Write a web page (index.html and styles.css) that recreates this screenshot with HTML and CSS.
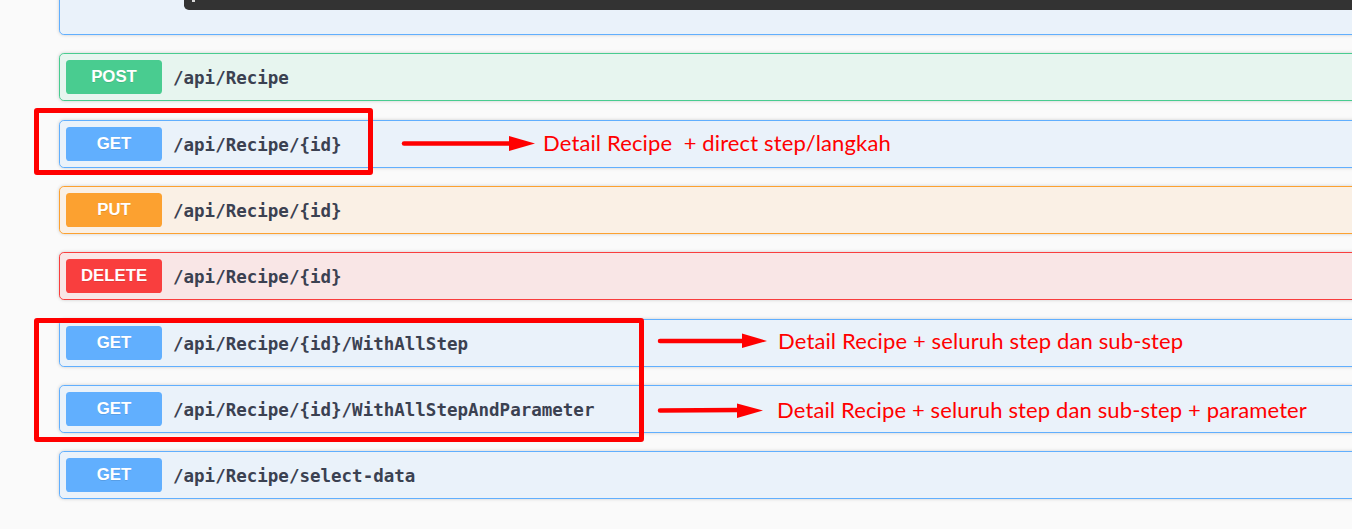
FILE: index.html
```html
<!DOCTYPE html>
<html>
<head>
<meta charset="utf-8">
<link rel="stylesheet" href="styles.css">
</head>
<body>
<div class="page">
  <div class="opblocks">
    <div class="opblock get expanded">
      <div class="op-body">
        <div class="code"><span class="code-tail"></span></div>
      </div>
    </div>
    <div class="opblock post">
      <div class="summary"><span class="method">POST</span><span class="path">/api/Recipe</span></div>
    </div>
    <div class="opblock get">
      <div class="summary"><span class="method">GET</span><span class="path">/api/Recipe/{id}</span></div>
    </div>
    <div class="opblock put">
      <div class="summary"><span class="method">PUT</span><span class="path">/api/Recipe/{id}</span></div>
    </div>
    <div class="opblock delete">
      <div class="summary"><span class="method">DELETE</span><span class="path">/api/Recipe/{id}</span></div>
    </div>
    <div class="opblock get">
      <div class="summary"><span class="method">GET</span><span class="path">/api/Recipe/{id}/WithAllStep</span></div>
    </div>
    <div class="opblock get">
      <div class="summary"><span class="method">GET</span><span class="path">/api/Recipe/{id}/WithAllStepAndParameter</span></div>
    </div>
    <div class="opblock get">
      <div class="summary"><span class="method">GET</span><span class="path">/api/Recipe/select-data</span></div>
    </div>
  </div>

  <div class="mark mark-1"></div>
  <div class="mark mark-2"></div>

  <svg class="arrows" width="1352" height="529" viewBox="0 0 1352 529">
    <line x1="404" y1="143.5" x2="512" y2="143.5" class="shaft"/>
    <polygon points="509,136 535,143.5 509,151" class="head"/>
    <line x1="660" y1="341" x2="745" y2="341" class="shaft"/>
    <polygon points="742,333.5 767,341 742,348" class="head"/>
    <line x1="660" y1="410.5" x2="740" y2="410" class="shaft"/>
    <polygon points="737,403.5 763,410.5 737,418" class="head"/>
  </svg>

  <span class="note note-1">Detail Recipe  + direct step/langkah</span>
  <span class="note note-2">Detail Recipe + seluruh step dan sub-step</span>
  <span class="note note-3">Detail Recipe + seluruh step dan sub-step + parameter</span>
</div>
</body>
</html>
```

FILE: styles.css
```css
html, body {
  margin: 0;
  padding: 0;
  background: #fafafa;
}

.page {
  position: relative;
  width: 1352px;
  height: 529px;
  overflow: hidden;
  background: #fafafa;
}

.opblocks {
  display: flex;
  flex-direction: column;
  gap: 18.33px;
  width: 1400px;
  margin-top: -51px;
  padding-left: 59px;
}

.opblock {
  border: 1px solid #61affe;
  border-radius: 4.8px;
  box-shadow: 0 0 3.6px rgba(0, 0, 0, 0.19);
  background: rgba(97, 175, 254, 0.1);
}

.opblock.post {
  border-color: #49cc90;
  background: rgba(73, 204, 144, 0.1);
}
.opblock.put {
  border-color: #fca130;
  background: rgba(252, 161, 48, 0.1);
}
.opblock.delete {
  border-color: #f93e3e;
  background: rgba(249, 62, 62, 0.1);
}

.op-body {
  padding: 0 0 24px 124px;
}

.code {
  height: 60px;
  background: #333333;
  border-radius: 0 0 4.8px 4.8px;
  display: flex;
  align-items: flex-end;
  padding-left: 8px;
}

.code-tail {
  width: 3px;
  height: 2px;
  margin-bottom: 8px;
  background: #d8d8d8;
}

.summary {
  display: flex;
  align-items: center;
  padding: 6px;
}

.method {
  display: flex;
  align-items: center;
  justify-content: center;
  width: 96px;
  height: 34px;
  border-radius: 3.6px;
  background: #61affe;
  color: #ffffff;
  font: 700 16.8px "Liberation Sans", Arial, sans-serif;
  text-shadow: 0 1px 0 rgba(0, 0, 0, 0.1);
}

.post .method { background: #49cc90; }
.put .method { background: #fca130; }
.delete .method { background: #f93e3e; }

.path {
  padding-left: 11px;
  font: 600 17.5px "DejaVu Sans Mono", monospace;
  color: #3b4151;
  position: relative;
  top: 1px;
}

.mark {
  position: absolute;
  border: 5px solid #ff0000;
  border-radius: 3px;
}
.mark-1 {
  left: 34px;
  top: 108px;
  width: 329px;
  height: 57px;
}
.mark-2 {
  left: 34px;
  top: 318px;
  width: 600px;
  height: 114px;
}

.arrows {
  position: absolute;
  left: 0;
  top: 0;
  pointer-events: none;
}
.shaft {
  stroke: #ff0000;
  stroke-width: 4.5;
  stroke-linecap: round;
}
.head {
  fill: #ff0000;
}

.note {
  position: absolute;
  white-space: pre;
  color: #ff0000;
  font: 400 22px Lato, "Open Sans", sans-serif;
  letter-spacing: 0.13px;
  line-height: 24px;
}
.note-1 { left: 543px; top: 131px; }
.note-2 { left: 778px; top: 329px; }
.note-3 { left: 777px; top: 398px; }
```
